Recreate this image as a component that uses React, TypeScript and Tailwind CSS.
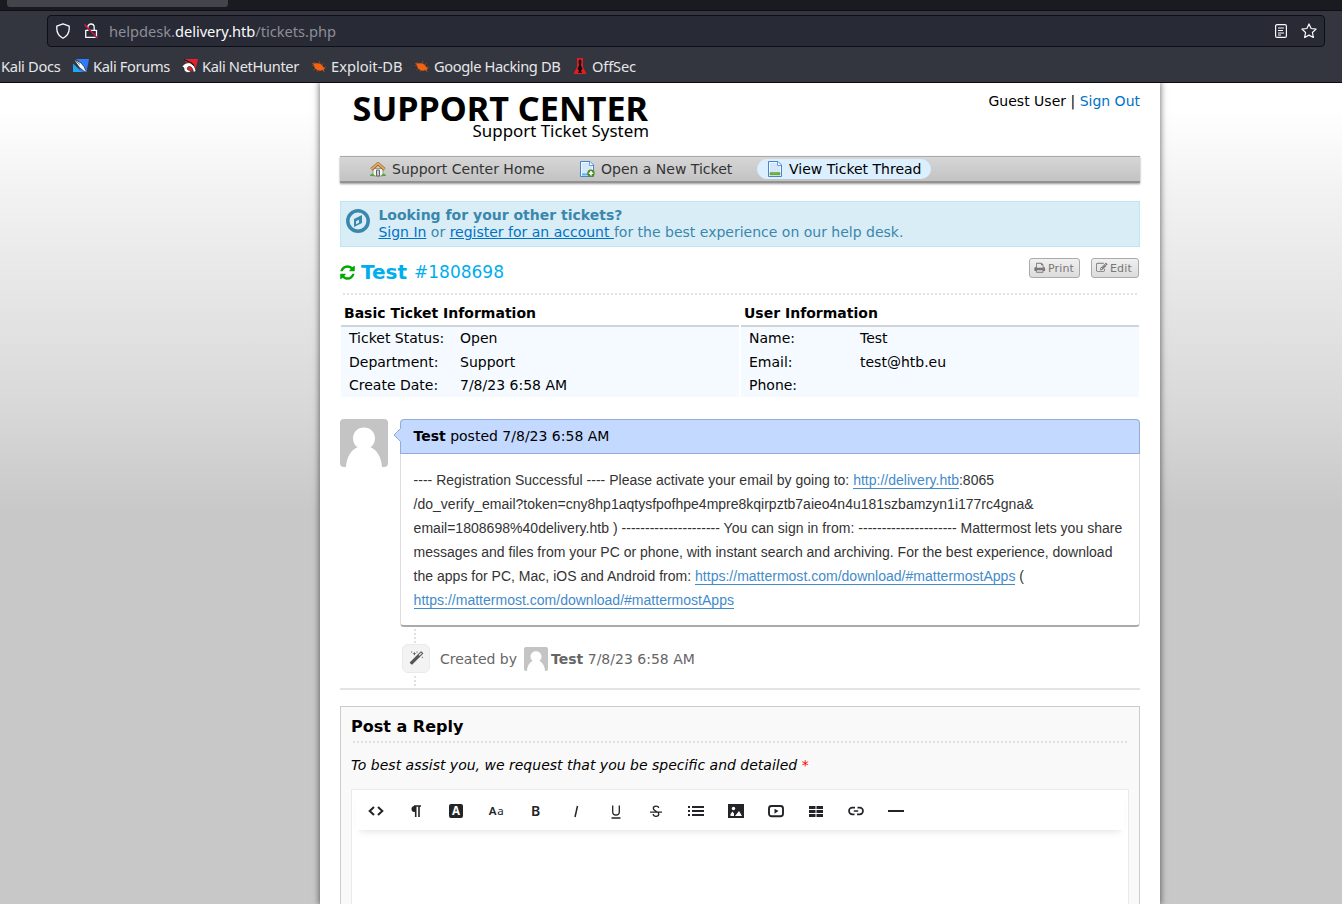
import type { ReactNode } from 'react';

const DOTS_X = 'h-[2px] bg-[repeating-linear-gradient(to_right,#e1e1e1_0_2px,transparent_2px_4px)]';
const DOTS_Y = 'w-[2px] bg-[repeating-linear-gradient(to_bottom,#e1e1e1_0_2px,transparent_2px_4px)]';

function Glyph({ d, className }: { d: string; className: string }) {
  return (
    <svg viewBox="0 0 1792 1792" className={className} fill="currentColor">
      <path d={d} />
    </svg>
  );
}

const REFRESH =
  'M1639 1056q0 5-1 7-64 268-268 434.5t-478 166.5q-146 0-282.5-55t-243.5-157l-129 129q-19 19-45 19t-45-19-19-45v-448q0-26 19-45t45-19h448q26 0 45 19t19 45-19 45l-137 137q71 66 161 102t187 36q134 0 250-65t186-179q11-17 53-117 8-23 30-23h192q13 0 22.5 9.5t9.5 22.5zm25-800v448q0 26-19 45t-45 19h-448q-26 0-45-19t-19-45 19-45l138-138q-148-137-349-137-134 0-250 65t-186 179q-11 17-53 117-8 23-30 23h-199q-13 0-22.5-9.5t-9.5-22.5v-7q65-268 270-434.5t480-166.5q146 0 284 55.5t245 156.5l130-129q19-19 45-19t45 19 19 45z';
const PRINT =
  'M448 1536h896v-256h-896v256zm0-640h896v-384h-160q-40 0-68-28t-28-68v-160h-640v640zm1152 64q0-26-19-45t-45-19-45 19-19 45 19 45 45 19 45-19 19-45zm128 0v416q0 13-9.5 22.5t-22.5 9.5h-224v160q0 40-28 68t-68 28h-960q-40 0-68-28t-28-68v-160h-224q-13 0-22.5-9.5t-9.5-22.5v-416q0-79 56.5-135.5t135.5-56.5h64v-544q0-40 28-68t68-28h672q40 0 88 20t76 48l152 152q28 28 48 76t20 88v256h64q79 0 135.5 56.5t56.5 135.5z';
const EDIT =
  'M888 1184l116-116-152-152-116 116v56h96v96h56zm440-720q-16-16-33 1l-350 350q-17 17-1 33t33-1l350-350q17-17 1-33zm80 594v190q0 119-84.5 203.5t-203.5 84.5h-832q-119 0-203.5-84.5t-84.5-203.5v-832q0-119 84.5-203.5t203.5-84.5h832q63 0 117 25 15 7 18 23 3 17-9 29l-49 49q-14 14-32 8-23-6-45-6h-832q-66 0-113 47t-47 113v832q0 66 47 113t113 47h832q66 0 113-47t47-113v-126q0-13 9-22l64-64q15-15 35-7t20 29zm-96-738l288 288-672 672h-288v-288zm444 132l-92 92-288-288 92-92q28-28 68-28t68 28l152 152q28 28 28 68t-28 68z';
const MAGIC =
  'M1254 581l293-293-107-107-293 293zm447-293q0 27-18 45l-1286 1286q-18 18-45 18t-45-18l-198-198q-18-18-18-45t18-45l1286-1286q18-18 45-18t45 18l198 198q18 18 18 45zm-1351-190l98 30-98 30-30 98-30-98-98-30 98-30 30-98zm350 162l196 60-196 60-60 196-60-196-196-60 196-60 60-196zm930 478l98 30-98 30-30 98-30-98-98-30 98-30 30-98zm-640-640l98 30-98 30-30 98-30-98-98-30 98-30 30-98z';

function BugIcon() {
  return (
    <svg viewBox="0 0 16 16" className="size-4">
      <g stroke="#a34a17" strokeWidth=".8" fill="none">
        <path d="M3 4l3 3M1 7.500l4 .5M2.500 12l3-2M6 14l1.500-3M8.500 3l.5 3M12.500 5l-2 2.500M15 9l-3 .5M13.500 14l-2.500-3" />
      </g>
      <path d="M1 4.700l3 1C5.500 5 8 5.100 9.800 6.300c1.400 1 2.300 2.100 2.600 3.300l2.100 1.200-1.900.2.700 2.200-2.100-1.100c-2 1-4.100.6-5.700-.6C4 10.400 3 9.100 3.200 7.400z" fill="#f26411" />
    </svg>
  );
}

function ForumsIcon() {
  return (
    <svg viewBox="0 0 16 16" className="size-4 shrink-0">
      <path d="M3 1h13l-2.500 13H8z" fill="#2b7dfb" />
      <path d="M0 5.500l9 8.500H0z" fill="#21a6f5" />
      <path d="M.5 1.200L7 4l4 4.500 1.500 3.500 2.500 3-4.500-2.200L6.500 9.500z" fill="#fff" stroke="#20242c" strokeWidth=".7" />
      <path d="M1 1.500l6 5M3.500 2l3 2.500" stroke="#30343b" strokeWidth=".7" />
    </svg>
  );
}

function NetHunterIcon() {
  return (
    <svg viewBox="0 0 16 16" className="size-4">
      <path d="M3 1h13l-3 12.500H5L4 8z" fill="#e6202c" />
      <path d="M0 8.500C2 5.500 5.500 4 8.500 5c3 1 5 4.500 5.500 8.500l-2.500.8C11 11 9.500 8.500 7.500 8.500S4.500 10.500 6 12l3 .5-1.500 2C4 15 1.500 13 2 10z" fill="#fff" stroke="#1b1d23" strokeWidth=".7" />
      <path d="M2 1.500l7 3.300 3 2.700" fill="none" stroke="#1b1d23" strokeWidth="1.200" />
    </svg>
  );
}

function OffSecIcon() {
  return (
    <svg viewBox="0 0 16 16" className="size-4">
      <path d="M5 0h6v9l3.500 7h-13L5 9z" fill="#e01f24" />
      <path d="M8 1l1.500 2-.5 4.500 1.500 3.500-1.500 1.500 1 2.500H6l1-2.500L5.500 11 7 7.500 6.500 3z" fill="#160b10" />
    </svg>
  );
}

function BrowserChrome() {
  return (
    <div className="flex h-[83px] shrink-0 flex-col border-b border-[#0c0c0f] bg-[#33363e] font-['Noto_Sans',sans-serif] text-[#e6e6e9]">
      <div className="h-[11px] border-b border-[#101014] bg-[#1a1b20] pl-[7px]">
        <div className="h-[7px] w-[221px] rounded-b-[3px] bg-[#43454d]" />
      </div>
      <div className="ml-[47px] mt-1 flex h-8 w-[1278px] shrink-0 items-center rounded-[4px] border border-[#0e0f14] bg-[#282a35] px-[7px]">
        <svg viewBox="0 0 16 16" className="size-4" fill="none" stroke="#fbfbfe" strokeWidth="1.300">
          <path d="M8 .8l6.200 2.300v2.600c0 4-2.200 7.300-6.200 9.500-4-2.200-6.200-5.500-6.200-9.500V3.100z" strokeLinejoin="round" />
        </svg>
        <svg viewBox="0 0 16 16" className="ml-3 size-4" fill="none">
          <path d="M4.800 7V4.200a3.200 3.200 0 0 1 6.400 0V7M2.700 7.300h10.800v7H2.700z" stroke="#fbfbfe" strokeWidth="1.300" strokeLinejoin="round" />
          <path d="M2 3l13 13" stroke="#282a35" strokeWidth="1.200" />
          <path d="M1.500 1.500l13 13.500" stroke="#e2134d" strokeWidth="1.300" />
        </svg>
        <span className="ml-[10px] whitespace-nowrap text-[14.67px] leading-8 tracking-[-0.03px] text-[#8d8e97]">
          helpdesk.<span className="text-[#fbfbfe]">delivery.htb</span>/tickets.php
        </span>
        <svg viewBox="0 0 16 16" className="ml-auto size-4" fill="none" stroke="#fbfbfe" strokeWidth="1.200">
          <rect x="2.600" y="1.600" width="10.800" height="12.800" rx="1.500" />
          <path d="M5 5h6M5 7.500h5M5 10h6M5 12h3" strokeWidth="1" />
        </svg>
        <svg viewBox="0 0 16 16" className="ml-3 size-4" fill="none" stroke="#fbfbfe" strokeWidth="1.200" strokeLinejoin="round">
          <path d="M8 .9l2.100 4.600 5 .6-3.700 3.400 1 5L8 12.100l-4.400 2.400 1-5L.9 6.100l5-.6z" />
        </svg>
      </div>
      <div className="flex flex-1 items-center whitespace-nowrap pl-px pt-[3px] text-[14.67px] leading-5">
        <span className="w-[72px] tracking-[-0.33px]">Kali Docs</span>
        <ForumsIcon />
        <span className="ml-1 w-[89px] tracking-[-0.36px]">Kali Forums</span>
        <span className="flex w-[20px]"><NetHunterIcon /></span>
        <span className="w-[109px] tracking-[-0.36px]">Kali NetHunter</span>
        <span className="flex w-[20px]"><BugIcon /></span>
        <span className="w-[83px]">Exploit-DB</span>
        <span className="flex w-[20px]"><BugIcon /></span>
        <span className="w-[138px] tracking-[-0.4px]">Google Hacking DB</span>
        <span className="flex w-[20px]"><OffSecIcon /></span>
        <span className="tracking-[-0.15px]">OffSec</span>
      </div>
    </div>
  );
}

function HomeIcon() {
  return (
    <svg viewBox="0 0 16 16" className="size-4">
      <path d="M3 7.500h10V15H3z" fill="#f7f5ef" stroke="#9a9a96" />
      <path d="M6.500 9h3v6h-3z" fill="#c9cccf" stroke="#666" />
      <path d="M0 14.500c1-2 2.500-2.500 4-1l1 1.500H0zM16 14.500c-1-2-2.500-2.500-4-1L11 15h5z" fill="#4ca83c" />
      <path d="M1.500 8.500L8 2.600l6.500 5.900" fill="none" stroke="#9a6022" strokeWidth="3.200" strokeLinejoin="round" />
      <path d="M1.500 8.300L8 2.400l6.500 5.900" fill="none" stroke="#e3ad64" strokeWidth="1.800" strokeLinejoin="round" />
    </svg>
  );
}

function PageIcon({ kind }: { kind: 'new' | 'view' }) {
  return (
    <svg viewBox="0 0 16 16" className="size-4">
      <path d="M1.500.5h9.500l3.500 3.500v11.500h-13z" fill="#d5e8fb" stroke="#4a83cb" strokeLinejoin="round" />
      <path d="M2.500 1.500h8v3h3v10h-11z" fill="none" stroke="#f3f9ff" />
      <path d="M10.500.8v3.700h3.700" fill="#fff" stroke="#6b9cda" />
      {kind === 'new' ? (
        <>
          <path d="M3 12.500h6v2H3z" fill="#50aff5" />
          <circle cx="12" cy="12.200" r="3.700" fill="#4e8d22" />
          <path d="M12 10v4.400M9.800 12.200h4.400" stroke="#fff" strokeWidth="1.600" />
        </>
      ) : (
        <path d="M3 11.500h10v2.500H3z" fill="#70b43c" stroke="#549a31" strokeWidth=".5" />
      )}
    </svg>
  );
}

function Avatar({ className }: { className: string }) {
  return (
    <svg viewBox="0 0 48 48" className={className}>
      <rect width="48" height="48" rx="4" fill="#c4c4c4" />
      <path d="M24 8.500c6.500 0 11 4.800 11 11 0 4-2 7-4.500 8.700C37 31 41.500 38 42 48H6c.5-10 5-17 11.500-19.800C15 26.500 13 23.500 13 19.500c0-6.200 4.500-11 11-11z" fill="#fff" />
    </svg>
  );
}

function InfoPanel({ title, rows }: { title: string; rows: [string, string][] }) {
  return (
    <div className="w-[398px]">
      <div className="h-[26px] border-b-2 border-[#cfd4d9] pl-[3px] text-sm font-bold leading-[25px]">{title}</div>
      <div className="h-[70px] bg-[#f4faff]">
        {rows.map(([k, v]) => (
          <div key={k} className="flex h-[23.5px] pl-2 text-sm leading-[22px]">
            <span className="w-[111px]">{k}</span>
            <span>{v}</span>
          </div>
        ))}
      </div>
    </div>
  );
}

function Tool({ children }: { children: ReactNode }) {
  return <span className="flex h-[42px] w-10 items-center justify-center text-[#222427]">{children}</span>;
}

function Toolbar() {
  return (
    <div className="mx-[4px] flex h-10 bg-white shadow-[0_5px_7px_-4px_rgba(0,0,0,0.13)]">
      <Tool><svg viewBox="0 0 16 16" className="size-4" fill="none" stroke="currentColor" strokeWidth="2"><path d="M6 4L1.700 8 6 12M10 4l4.300 4L10 12" /></svg></Tool>
      <Tool><svg viewBox="0 0 16 16" className="size-4" fill="none" stroke="currentColor" strokeWidth="1.600"><path d="M8 9H6.500a3 3 0 0 1 0-6H8z" fill="currentColor" stroke="none" /><path d="M13 3H6M7.700 3v11M11 3v11" /></svg></Tool>
      <Tool><span className="flex h-[14px] w-[14px] items-center justify-center rounded-[2px] bg-[#222427] pb-px font-['Noto_Sans',sans-serif] text-[11.5px] font-bold leading-none text-white">A</span></Tool>
      <Tool><span className="pl-px font-['Noto_Sans',sans-serif] text-[11.5px] font-semibold tracking-[0.6px]">A<span className="font-normal">a</span></span></Tool>
      <Tool><span className="pb-px pr-px font-['Noto_Sans',sans-serif] text-[14px] font-semibold">B</span></Tool>
      <Tool><svg viewBox="0 0 16 16" className="size-4" fill="none" stroke="currentColor" strokeWidth="1.500"><path d="M9.500 3L7 14" /></svg></Tool>
      <Tool><svg viewBox="0 0 16 16" className="size-4" fill="none" stroke="currentColor" strokeWidth="1.300"><path d="M4.700 2.500v6.200a3.300 3.300 0 0 0 6.600 0V2.500M3.500 15h9" /></svg></Tool>
      <Tool><svg viewBox="0 0 16 16" className="size-4" fill="none" stroke="currentColor" strokeWidth="1.300"><path d="M10.700 5c-.2-1.300-1.300-1.900-2.700-1.900-1.500 0-2.700.8-2.700 2.200C5.300 9 10.800 7.500 10.800 11c0 1.500-1.300 2.300-2.800 2.300s-2.700-.8-2.900-2.300M2 9.200h12" /></svg></Tool>
      <Tool><svg viewBox="0 0 16 16" className="size-4" fill="none" stroke="currentColor" strokeWidth="1.800"><path d="M0 4h2M0 8h2M0 12h2M4 4h12M4 8h12M4 12h12" /></svg></Tool>
      <Tool><svg viewBox="0 0 16 16" className="size-4" fill="currentColor"><path d="M0 1h16v14H0z" /><circle cx="5.500" cy="5.500" r="1.700" fill="#fff" /><path d="M2.500 13v-2l2-2.500 1.500 2v2.500zM7 13l4-5 3 5z" fill="#fff" /></svg></Tool>
      <Tool><svg viewBox="0 0 16 16" className="size-4" fill="none" stroke="currentColor" strokeWidth="1.900"><rect x="1" y="3" width="14" height="10.200" rx="2.500" /><path d="M6.500 5.700v5L10.500 8z" fill="currentColor" stroke="none" /></svg></Tool>
      <Tool><svg viewBox="0 0 16 16" className="size-4" fill="currentColor"><path d="M1 3h6.500v3H1zM8.500 3H15v3H8.500zM1 7h6.500v3H1zM8.500 7H15v3H8.500zM1 11h6.500v3H1zM8.500 11H15v3H8.500z" /></svg></Tool>
      <Tool><svg viewBox="0 0 16 16" className="size-4" fill="none" stroke="currentColor" strokeWidth="1.700"><path d="M7 4.700H4.300a3.300 3.300 0 0 0 0 6.600h2.200M9 11.300h2.700a3.300 3.300 0 0 0 0-6.600H9.500M5.800 8h4.400" /></svg></Tool>
      <Tool><span className="h-[2px] w-4 bg-[#222427]" /></Tool>
    </div>
  );
}

function SmallButton({ icon, label, className }: { icon: string; label: string; className: string }) {
  return (
    <span className={`flex h-5 items-center rounded-[3px] border border-[#aaa] bg-linear-to-b from-[#f0f0f0] to-[#dcdcdc] pl-1 text-[11px] text-[#777] ${className}`}>
      <Glyph d={icon} className="mr-[2.5px] size-[11.5px]" />
      <span className="pt-[2px] tracking-[0.15px]">{label}</span>
    </span>
  );
}

function Link({ children }: { children: ReactNode }) {
  return <span className="border-b border-[#428bca] text-[#428bca]">{children}</span>;
}

export default function App() {
  return (
    <div className="flex h-[904px] w-[1342px] flex-col overflow-hidden font-['DejaVu_Sans',sans-serif] text-black">
      <BrowserChrome />
      <div className="flex-1 overflow-hidden bg-[linear-gradient(to_bottom,#fff_0px,#fff_25px,#f1f1f1_117px,#d8d8d8_327px,#c8c8c8_430px)] pl-[320px]">
        <main className="h-[821px] w-[840px] bg-white px-5 shadow-[0_0_6px_1px_rgba(0,0,0,0.5)]">
          <header className="flex h-[73px] justify-between">
            <div className="flex w-[309px] flex-col items-end whitespace-nowrap font-['Noto_Sans',sans-serif]">
              <span className="h-[38px] pr-px pt-[7px] text-[34.2px] font-bold leading-[36px]">SUPPORT CENTER</span>
              <span className="text-[16.9px] leading-[20px]">Support Ticket System</span>
            </div>
            <div className="pt-2 text-sm">
              Guest User | <span className="text-[#0072c6]">Sign Out</span>
            </div>
          </header>
          <nav className="flex h-[27px] items-start border-b-2 border-t border-b-[#929292] border-t-[#aaa] bg-linear-to-b from-[#d6d6d6] to-[#c3c3c3] pl-[20px] pt-[2px] text-sm text-[#333] shadow-[0_1px_2px_rgba(0,0,0,0.4)]">
            <span className="flex h-5 w-[209px] items-center gap-[6px] pl-[10px]"><HomeIcon />Support Center Home</span>
            <span className="flex h-5 w-[188px] items-center gap-[6px] pl-[10px]"><PageIcon kind="new" />Open a New Ticket</span>
            <span className="flex h-5 w-[174px] items-center gap-[6px] whitespace-nowrap rounded-[10px] bg-[#dbefff] pl-[10px] text-black"><PageIcon kind="view" />View Ticket Thread</span>
          </nav>
          <div className="mt-[18px] flex h-[46px] border border-[#bce8f1] bg-[#d9edf7] pl-[5px] pt-[5px] text-sm leading-[17px] text-[#3a87ad]">
            <svg viewBox="0 0 24 24" className="mr-[8.4px] mt-[2px] size-6">
              <circle cx="12" cy="12" r="10.200" fill="none" stroke="currentColor" strokeWidth="3.500" />
              <path d="M8 10l8-4v8l-8 4z" fill="currentColor" />
              <path d="M10 12.200l3-1.500v3l-3 1.500z" fill="#d9edf7" />
            </svg>
            <div className="whitespace-nowrap">
              <div className="font-bold">Looking for your other tickets?</div>
              <div>
                <span className="text-[#0072c6] underline">Sign In</span> or <span className="whitespace-pre text-[#0072c6] underline">register for an account </span>for the best experience on our help desk.
              </div>
            </div>
          </div>
          <div className="flex h-[46px] justify-between">
            <div className="flex items-center text-[#00aeef]">
              <Glyph d={REFRESH} className="-ml-px mr-[4px] mt-[4px] size-[17px] text-[#00a800]" />
              <span className="ml-px mt-[3px] text-[20px] font-bold">Test</span>
              <span className="ml-[7px] mt-[5px] text-[17px]">#1808698</span>
            </div>
            <div className="flex gap-[11px] pr-px pt-[11px]">
              <SmallButton icon={PRINT} label="Print" className="w-[51px]" />
              <SmallButton icon={EDIT} label="Edit" className="w-[48px]" />
            </div>
          </div>
          <div className={`ml-[3px] w-[794px] ${DOTS_X}`} />
          <section className="mt-[6px] flex h-[96px] gap-[2px] pl-px">
            <InfoPanel title="Basic Ticket Information" rows={[['Ticket Status:', 'Open'], ['Department:', 'Support'], ['Create Date:', '7/8/23 6:58 AM']]} />
            <InfoPanel title="User Information" rows={[['Name:', 'Test'], ['Email:', 'test@htb.eu'], ['Phone:', '']]} />
          </section>
          <section className="mt-[22px] flex gap-3">
            <Avatar className="size-12" />
            <div className="relative h-[208px] w-[740px] rounded-[4px] border border-b-2 border-[#ddd] border-b-[#aaa]">
              <svg viewBox="0 0 8 14" className="absolute -left-[8px] top-[8px] h-[14px] w-2">
                <path d="M8 0L1 7l7 7z" fill="#c3d9ff" />
                <path d="M7.500 .5L1 7l6.500 6.500" fill="none" stroke="#8fa8d8" />
              </svg>
              <div className="-mx-px -mt-px h-[35px] rounded-t-[4px] border border-[#92abda] bg-[#c3d9ff] pl-[12.5px] text-sm leading-[33px]">
                <b>Test</b> posted 7/8/23 6:58 AM
              </div>
              <div className="whitespace-nowrap pl-[12.6px] pt-[14px] font-['Liberation_Sans',Arial,sans-serif] text-sm leading-6 text-[#333]">
                <div className="tracking-[0.01px]">---- Registration Successful ---- Please activate your email by going to: <Link>http://delivery.htb</Link>:8065</div>
                <div>/do_verify_email?token=cny8hp1aqtysfpofhpe4mpre8kqirpztb7aieo4n4u181szbamzyn1i177rc4gna&amp;</div>
                <div className="tracking-[0.025px]">email=1808698%40delivery.htb ) --------------------- You can sign in from: --------------------- Mattermost lets you share</div>
                <div>messages and files from your PC or phone, with instant search and archiving. For the best experience, download</div>
                <div className="tracking-[0.012px]">the apps for PC, Mac, iOS and Android from: <Link>https://mattermost.com/download/#mattermostApps</Link> (</div>
                <div className="tracking-[0.012px]"><Link>https://mattermost.com/download/#mattermostApps</Link></div>
              </div>
            </div>
          </section>
          <div className={`ml-[74px] mt-[2px] h-[14px] ${DOTS_Y}`} />
          <div className="ml-[62px] mt-px flex h-[29px] items-center text-sm text-[#666]">
            <span className="mr-[10px] flex h-[29px] w-7 items-center justify-center rounded-[6px] border border-[#eaeaea] bg-[#f3f3f3]">
              <Glyph d={MAGIC} className="size-[15px] text-[#555]" />
            </span>
            Created by
            <Avatar className="ml-[7px] mr-[3px] size-6" />
            <b className="mr-[4.5px]">Test</b>7/8/23 6:58 AM
          </div>
          <div className={`ml-[74px] mt-[3px] h-[10px] ${DOTS_Y}`} />
          <div className="mt-[2px] h-[2px] bg-[#e4e4e4]" />
          <section className="mt-4 h-[240px] border border-[#ccc] bg-[#f9f9f9] px-[10px]">
            <h2 className="h-[34px] pt-2 text-base font-bold">Post a Reply</h2>
            <div className={`ml-[2px] w-[774px] ${DOTS_X}`} />
            <p className="h-[46px] pt-3 text-sm italic">
              To best assist you, we request that you be specific and detailed <span className="not-italic text-[#f00]">*</span>
            </p>
            <div className="h-[160px] w-[778px] border border-[#ebebeb] bg-white">
              <Toolbar />
            </div>
          </section>
        </main>
      </div>
    </div>
  );
}
